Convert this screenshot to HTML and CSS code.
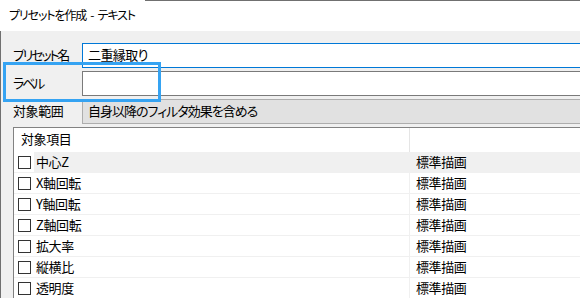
FILE: index.html
```html
<!DOCTYPE html>
<html lang="ja">
<head>
    <meta charset="UTF-8">
    <meta name="viewport" content="width=device-width, initial-scale=1.0">
    <title>プリセットを作成 - テキスト</title>
    <link rel="stylesheet" href="styles.css">
</head>
<body>
    <div class="window">
        <div class="titlebar">プリセットを作成 - テキスト</div>

        <div class="content">
            <div class="form">
                <label class="field-label narrow">プリセット名</label>
                <div class="text-input focused">二重縁取り</div>

                <label class="field-label narrow">ラベル</label>
                <div class="text-input"></div>

                <label class="field-label">対象範囲</label>
                <div class="combo">自身以降のフィルタ効果を含める</div>
            </div>

            <div class="list">
                <div class="list-head">
                    <div class="head-cell">対象項目</div>
                    <div class="head-cell head-mode"></div>
                </div>
                <div class="list-row hover">
                    <div class="name-cell"><span class="check"></span><span class="name">中心Z</span></div>
                    <div class="mode-cell">標準描画</div>
                </div>
                <div class="list-row">
                    <div class="name-cell"><span class="check"></span><span class="name">X軸回転</span></div>
                    <div class="mode-cell">標準描画</div>
                </div>
                <div class="list-row">
                    <div class="name-cell"><span class="check"></span><span class="name">Y軸回転</span></div>
                    <div class="mode-cell">標準描画</div>
                </div>
                <div class="list-row">
                    <div class="name-cell"><span class="check"></span><span class="name">Z軸回転</span></div>
                    <div class="mode-cell">標準描画</div>
                </div>
                <div class="list-row">
                    <div class="name-cell"><span class="check"></span><span class="name">拡大率</span></div>
                    <div class="mode-cell">標準描画</div>
                </div>
                <div class="list-row">
                    <div class="name-cell"><span class="check"></span><span class="name">縦横比</span></div>
                    <div class="mode-cell">標準描画</div>
                </div>
                <div class="list-row">
                    <div class="name-cell"><span class="check"></span><span class="name">透明度</span></div>
                    <div class="mode-cell">標準描画</div>
                </div>
            </div>
        </div>

        <!-- annotation frame around the label field -->
        <div class="callout"></div>
    </div>
</body>
</html>
```

FILE: styles.css
```css
html, body {
    margin: 0;
    padding: 0;
    overflow: hidden;
}
body {
    font-family: "Noto Sans CJK JP", "Noto Sans", sans-serif;
    font-size: 13px;
    font-feature-settings: "palt";
    letter-spacing: -0.4px;
    color: #000;
    background-color: #fff;
}
.window {
    position: relative;
    width: 600px;
    height: 298px;
    overflow: hidden;
}
.titlebar {
    height: 31px;
    line-height: 30px;
    padding-left: 9px;
    font-size: 12px;
    letter-spacing: -1.1px;
    word-spacing: 2.5px;
    background: linear-gradient(#707070, #707070) 145px 0 / 100% 1px no-repeat, #fff;
}
.content {
    height: 267px;
    padding: 12px 0 0 12px;
    border-left: 1px solid #707070;
    background-color: #f0f0f0;
    box-sizing: border-box;
}
.form {
    display: grid;
    grid-template-columns: 69px 1fr;
    grid-auto-rows: 25px;
    row-gap: 3px;
}
.field-label {
    display: flex;
    align-items: center;
    padding-bottom: 2px;
    letter-spacing: -0.4px;
}
.field-label.narrow {
    letter-spacing: -2.2px;
}
.text-input, .combo {
    display: flex;
    align-items: center;
    padding: 0 0 2px 5px;
    box-sizing: border-box;
    border: 1px solid #7a7a7a;
    background-color: #fff;
}
.text-input.focused {
    border-color: #0078d7;
    letter-spacing: -0.6px;
}
.combo {
    border-color: #adadad;
    background-color: #e1e1e1;
    letter-spacing: -1px;
}
.list {
    margin-top: 3px;
    border: 1px solid #828282;
    background-color: #fff;
}
.list-head, .list-row {
    display: grid;
    grid-template-columns: 395px 1fr;
}
.list-head {
    height: 24px;
}
.head-cell {
    display: flex;
    align-items: center;
    padding: 0 0 4px 7px;
}
.head-mode {
    border-left: 1px solid #e5e5e5;
}
.list-row {
    height: 21px;
    border-bottom: 1px solid #f0f0f0;
    box-sizing: border-box;
}
.name-cell {
    display: flex;
    align-items: center;
    padding-left: 4px;
}
.check {
    width: 13px;
    height: 13px;
    box-sizing: border-box;
    border: 1px solid #333;
    background-color: #fff;
    margin-right: 3px;
}
.name {
    flex: 1;
    align-self: stretch;
    display: flex;
    align-items: center;
    padding: 0 0 2px 2px;
}
.mode-cell {
    display: flex;
    align-items: center;
    padding: 0 0 2px 6px;
    border-left: 1px solid #f0f0f0;
}
.list-row.hover .name,
.list-row.hover .mode-cell {
    background-color: #f0f0f0;
}
.callout {
    position: absolute;
    left: 3px;
    top: 62px;
    width: 158px;
    height: 40px;
    box-sizing: border-box;
    border: 3px solid #35a3f2;
}
```
